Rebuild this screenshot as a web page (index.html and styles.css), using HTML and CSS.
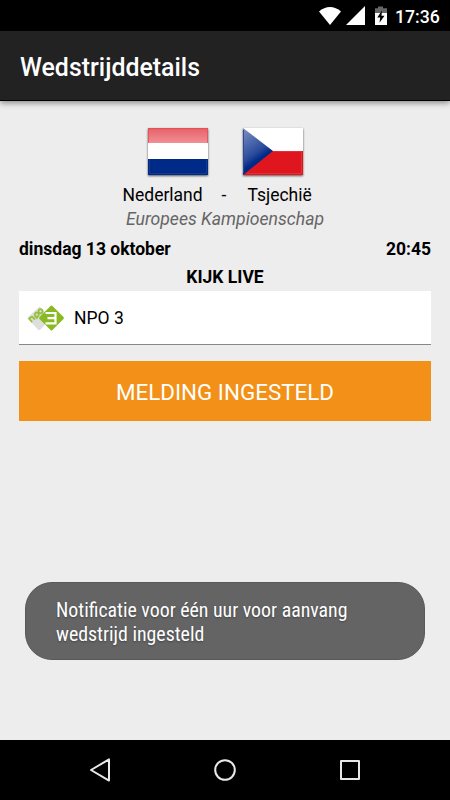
FILE: index.html
```html
<!DOCTYPE html>
<html lang="nl">
<head>
<meta charset="utf-8">
<title>Wedstrijddetails</title>
<link rel="stylesheet" href="styles.css">
</head>
<body>
<div class="screen">
  <div class="status">
    <svg class="status-icons" width="72" height="20" viewBox="0 0 72 20">
      <path fill="#fff" d="M0 5.4C6.500 -.6 15.500 -.6 22 5.400L11 19Z"/>
      <path fill="#fff" d="M27 19L46 0V19Z"/>
      <path fill="#666" d="M59 .5h5v1.700h4V7H56V2.200h3Z"/>
      <path fill="#fff" d="M56 7h12v12H56Z"/>
      <path fill="#000" d="M63 4.500L58.300 11.500h2.900l-.7 5.200 5-7h-3Z"/>
    </svg>
    <span class="clock">17:36</span>
  </div>
  <header class="appbar"><h1>Wedstrijddetails</h1></header>
  <main class="content">
    <div class="flags">
      <svg width="68" height="58" viewBox="0 0 68 58">
        <defs><linearGradient id="red" x2="0" y2="1"><stop stop-color="#e86068"/><stop offset="1" stop-color="#f09095"/></linearGradient></defs>
        <g class="flag"><rect x="4" y="4" width="60" height="47" fill="#fff"/>
        <rect x="4" y="4" width="60" height="15" fill="url(#red)"/>
        <rect x="4" y="35" width="60" height="16" fill="#002a88"/></g>
        <path d="M4.500 19V4.500h59V19" fill="none" stroke="#df4951" opacity=".7"/>
        <path d="M5.500 35V49.500h57V35" fill="none" stroke="#315096" opacity=".4"/>
      </svg>
      <svg width="68" height="58" viewBox="0 0 68 58">
        <defs><linearGradient id="blue" x2=".45" y2="1"><stop stop-color="#7e91c5"/><stop offset=".6" stop-color="#2a4a9a"/><stop offset=".75" stop-color="#002a88"/></linearGradient></defs>
        <g class="flag"><rect x="4" y="4" width="60" height="47" fill="#fff"/>
        <rect x="4" y="27" width="60" height="24" fill="#df161e"/>
        <path d="M4 4L34 27L4 51Z" fill="url(#blue)"/></g>
        <path d="M34 27.500H62.500V49.500H8" fill="none" stroke="#ed555a" opacity=".4"/>
        <path d="M4.500 6V49" stroke="#30498d"/>
      </svg>
    </div>
    <div class="teams"><span class="home">Nederland</span><span class="dash">-</span><span class="away">Tsjechië</span></div>
    <div class="league"><span>Europees Kampioenschap</span></div>
    <div class="when"><span>dinsdag 13 oktober</span><span>20:45</span></div>
    <div class="live"><span>KIJK LIVE</span></div>
    <div class="channel">
      <svg width="38" height="28" viewBox="0 0 38 28">
        <path d="M12.500 2.500L24 14L13.500 25.500Q12 26.500 11 25.500L1 15Q0 14 1 13Z" fill="#dedede"/>
        <g transform="translate(3.200 15.800) rotate(-42)" fill="none" stroke="#95c13b" stroke-width="1.800">
          <path d="M0 3V-1.500H1.500Q3.700-1.500 3.700 1V3M6.300 4V0"/>
          <circle cx="8.300" cy=".6" r="2"/><circle cx="13.400" cy=".6" r="2"/>
        </g>
        <path d="M23.500 2Q24.500 1 25.500 2L36.500 13Q37.500 14 36.500 15L25.500 26Q24.500 27 23.500 26L12.500 15Q11.500 14 12.500 13Z" fill="#8aba22"/>
        <path d="M18.500 9H28.500V19.300H18.500M20.500 14.200H28.500" fill="none" stroke="#fff" stroke-width="2.200"/>
      </svg>
      <span class="channel-name">NPO 3</span>
    </div>
    <div class="button"><span>MELDING INGESTELD</span></div>
  </main>
  <div class="toast"><p>Notificatie voor één uur voor aanvang<br>wedstrijd ingesteld</p></div>
  <nav class="navbar">
    <svg width="24" height="26" viewBox="0 0 24 26"><path d="M21 2.400V23.600L3 13Z"/></svg>
    <svg width="24" height="26" viewBox="0 0 24 26"><circle cx="12" cy="13" r="9.800"/></svg>
    <svg width="24" height="26" viewBox="0 0 24 26"><rect x="3" y="4" width="18" height="18"/></svg>
  </nav>
</div>
</body>
</html>
```
FILE: styles.css
```css
* { box-sizing: border-box; }
body { margin: 0; font-family: Roboto, "Liberation Sans", sans-serif; color: #000; }
.screen { position: relative; display: flex; flex-direction: column; width: 450px; height: 800px; background: #ededed; overflow: hidden; }
.status { position: relative; z-index: 1; display: flex; height: 31px; padding: 6px 10px 0 0; justify-content: flex-end; background: #000; color: #fff; }
.status-icons { margin-right: 4px; }
.clock { width: 45px; font-size: 17.7px; font-weight: 500; line-height: 22px; white-space: nowrap; }
.appbar { height: 70px; padding: 0 20px; background: #222; border-bottom: 1px solid #000; box-shadow: 0 2px 6px #888; }
h1 { margin: 0; font-size: 24.9px; font-weight: 500; line-height: 74px; }
.appbar h1 { color: #fff; }
.content { display: flex; flex: 1; flex-direction: column; padding: 23px 19px 0; }
.flags { display: flex; height: 60px; justify-content: center; gap: 27px; }
.flags svg { flex: none; }
.flag { filter: drop-shadow(0 1px 1.200px #555); }
.teams { display: flex; height: 23px; padding-left: 103.5px; font-size: 17.5px; line-height: 23px; }
.home { width: 99px; }
.dash { width: 26px; }
.league { height: 25px; text-align: center; color: #656565; font-size: 17.6px; font-style: italic; line-height: 24px; }
.when { display: flex; height: 32px; justify-content: space-between; font-size: 17.5px; font-weight: 700; line-height: 35px; }
.live { height: 27px; text-align: center; font-size: 17.5px; font-weight: 700; line-height: 26px; }
.channel { display: flex; height: 54px; align-items: center; gap: 9px; padding-left: 8px; background: #fff; border-bottom: 1px solid #888; }
.channel-name { font-size: 17.5px; }
.button { display: flex; height: 60px; margin-top: 16px; align-items: center; justify-content: center; background: #f29018; color: #fff; font-size: 22.4px; padding-top: 2px; }
.toast { position: absolute; top: 582px; left: 25px; width: 400px; height: 78px; padding: 16px 30px; border-radius: 27px; background: #646464; border: 1px solid #595959; color: #fff; }
.toast p { margin: 0; font-family: "Roboto Condensed", Roboto, sans-serif; font-stretch: 75%; font-size: 19.85px; line-height: 24px; white-space: nowrap; text-shadow: 0 1px 2px #444; }
.navbar { display: flex; height: 60px; padding: 0 88px; align-items: center; justify-content: space-between; background: #000; fill: none; stroke: #e8e8e8; stroke-width: 2; stroke-linejoin: round; }
```
